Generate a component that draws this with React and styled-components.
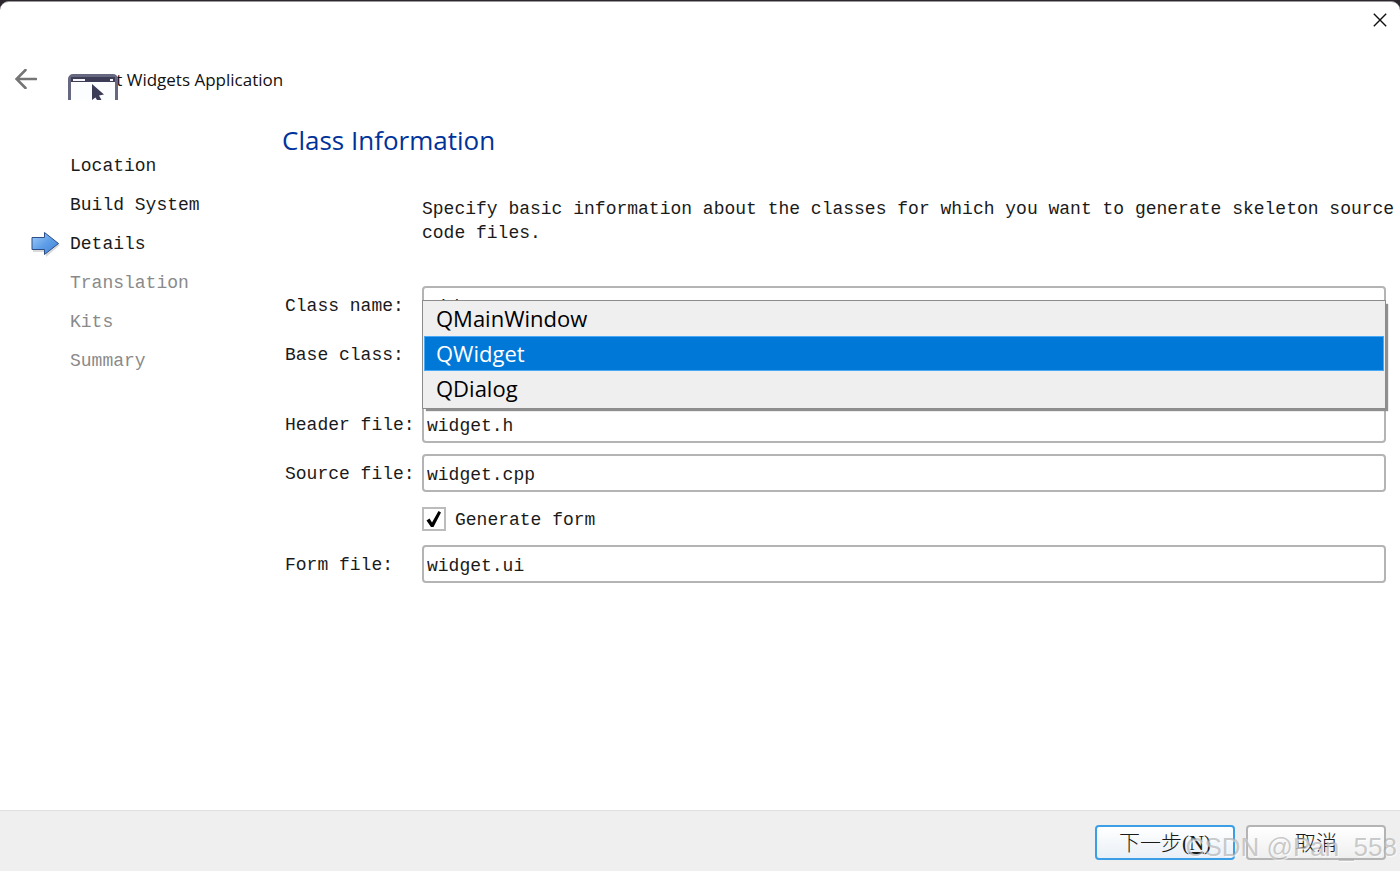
import React from "react";
import styled, { createGlobalStyle } from "styled-components";

const steps = [
  { name: "Location", state: "done" },
  { name: "Build System", state: "done" },
  { name: "Details", state: "current" },
  { name: "Translation", state: "todo" },
  { name: "Kits", state: "todo" },
  { name: "Summary", state: "todo" },
];

const baseClasses = ["QMainWindow", "QWidget", "QDialog"];

const App = () => {
  return (
    <>
      <GlobalStyle />
      <Desktop>
        <Dialog>
          <TitleBar>
            <CloseButton type="button" aria-label="Close">
              <svg width="14" height="14" viewBox="0 0 14 14">
                <path d="M0.8 0.8L13.2 13.2M13.2 0.8L0.8 13.2" stroke="#111" strokeWidth="1.4" />
              </svg>
            </CloseButton>
          </TitleBar>

          <Header>
            <BackButton type="button" aria-label="Back">
              <svg width="22" height="20" viewBox="0 0 22 20" fill="none">
                <path d="M21 10H2M10.5 1L1.5 10L10.5 19" stroke="#757575" strokeWidth="2.6" strokeLinecap="round" />
              </svg>
            </BackButton>
            <WizardTitle>Qt Widgets Application</WizardTitle>
            <AppIcon />
          </Header>

          <Body>
            <Steps>
              {steps.map((step) => (
                <Step key={step.name} $state={step.state}>
                  <Marker>{step.state === "current" && <StepArrow />}</Marker>
                  {step.name}
                </Step>
              ))}
            </Steps>

            <Page>
              <PageTitle>Class Information</PageTitle>
              <Intro>
                Specify basic information about the classes for which you want to generate skeleton
                source code files.
              </Intro>
              <Form>
                <FieldGroup>
                  <Label htmlFor="className">Class name:</Label>
                  <TextInput id="className" defaultValue="Widget" />
                  <Label htmlFor="baseClass">Base class:</Label>
                  <Combo>
                    <Select id="baseClass" defaultValue="QWidget">
                      {baseClasses.map((name) => (
                        <option key={name}>{name}</option>
                      ))}
                    </Select>
                    <Popup role="listbox" aria-label="Base class">
                      {baseClasses.map((name) => (
                        <PopupItem
                          key={name}
                          role="option"
                          aria-selected={name === "QWidget"}
                          $active={name === "QWidget"}
                        >
                          {name}
                        </PopupItem>
                      ))}
                    </Popup>
                  </Combo>
                </FieldGroup>
                <FieldGroup>
                  <Label htmlFor="headerFile">Header file:</Label>
                  <TextInput id="headerFile" defaultValue="widget.h" />
                  <Label htmlFor="sourceFile">Source file:</Label>
                  <TextInput id="sourceFile" defaultValue="widget.cpp" />
                  <CheckRow>
                    <CheckBoxWrap>
                      <Checkbox id="generateForm" type="checkbox" defaultChecked />
                      <CheckMark width="18" height="18" viewBox="0 0 18 18" fill="none">
                        <path d="M1.500 10.500L4.500 8.500L7 12.500L13.500 1L16 2.500L8.500 17H6Z" fill="#000" />
                      </CheckMark>
                    </CheckBoxWrap>
                    <CheckLabel htmlFor="generateForm">Generate form</CheckLabel>
                  </CheckRow>
                  <Label htmlFor="formFile">Form file:</Label>
                  <TextInput id="formFile" defaultValue="widget.ui" />
                </FieldGroup>
              </Form>
            </Page>
          </Body>

          <Footer>
            <FooterButton type="button" $primary>
              下一步(<u>N</u>)
            </FooterButton>
            <FooterButton type="button">取消</FooterButton>
            <Watermark>CSDN @Pan_558</Watermark>
          </Footer>
        </Dialog>
      </Desktop>
    </>
  );
};

const AppIcon = () => (
  <IconSlot>
    <svg width="50" height="26" viewBox="0 0 50 26">
      <path d="M1.5 26V5a3.5 3.5 0 0 1 3.5-3.5H45A3.5 3.5 0 0 1 48.500 5V26" fill="#fcfdfe" stroke="#666880" strokeWidth="3" />
      <rect x="3" y="3" width="44" height="5" fill="#3d3d58" />
      <rect x="5" y="5" width="12" height="2" fill="#f4f4f8" />
      <rect x="42" y="5" width="3" height="2" fill="#f4f4f8" />
      <path d="M24 10L36 20.500L31 21.500L33.500 26H29L27.500 23.500L24 26Z" fill="#3d3d58" />
    </svg>
  </IconSlot>
);

const StepArrow = () => (
  <svg width="30" height="26" viewBox="0 0 30 26">
    <defs>
      <linearGradient id="arrowFill" x1="0" y1="0" x2="1" y2="1">
        <stop offset="0" stopColor="#a5d0fb" />
        <stop offset="0.5" stopColor="#5f9fe8" />
        <stop offset="1" stopColor="#3f80d6" />
      </linearGradient>
    </defs>
    <path d="M2 8H15V3L29 14L15 26V21H2Z" fill="#000" opacity="0.15" />
    <path d="M1 6.500H13.500V1.500L27.500 12.500L13.500 23.500V18.500H1Z" fill="url(#arrowFill)" stroke="#2b4f86" strokeWidth="1" />
  </svg>
);

const GlobalStyle = createGlobalStyle`
  * {
    box-sizing: border-box;
  }

  body {
    margin: 0;
    font-family: "Liberation Mono", "Noto Sans CJK SC", monospace;
    font-size: 18px;
    line-height: 24px;
    color: #1a1a1a;
  }

  button, input, select {
    font: inherit;
    color: inherit;
  }
`;

const Desktop = styled.div`
  display: flex;
  min-height: 100vh;
  padding-top: 1px;
  background: #2c282d;
`;

const Dialog = styled.main`
  display: flex;
  flex: 1;
  flex-direction: column;
  border-top: 1px solid #9a989b;
  border-radius: 9px 9px 0 0;
  background: #fff;
`;

const TitleBar = styled.div`
  display: flex;
  justify-content: flex-end;
  height: 36px;
`;

const CloseButton = styled.button`
  display: flex;
  align-items: center;
  justify-content: center;
  width: 40px;
  padding: 0;
  border: none;
  background: none;
`;

const Header = styled.header`
  position: relative;
  display: flex;
  align-items: center;
  height: 84px;
  padding-left: 15px;
`;

const BackButton = styled.button`
  display: flex;
  padding: 0 0 3px;
  border: none;
  background: none;
`;

const WizardTitle = styled.span`
  margin-left: 66px;
  font-family: "Open Sans", sans-serif;
  font-size: 17px;
  color: #111;
`;

/* sits over the first letter of the title */
const IconSlot = styled.div`
  position: absolute;
  top: 36px;
  left: 68px;
  display: flex;
`;

const Body = styled.div`
  display: flex;
  flex: 1;
`;

const Steps = styled.ol`
  display: flex;
  flex-direction: column;
  gap: 15px;
  width: 282px;
  margin: 0;
  padding: 32px 0 0 31px;
  list-style: none;
`;

const Step = styled.li`
  display: flex;
  align-items: center;
  color: ${({ $state }) => ($state === "todo" ? "#8a8a8a" : "#1a1a1a")};
`;

const Marker = styled.span`
  display: flex;
  align-items: center;
  width: 39px;
  height: 24px;
`;

const Page = styled.section`
  flex: 1;
  min-width: 0;
`;

const PageTitle = styled.h1`
  margin: 0;
  font-family: "Open Sans", sans-serif;
  font-size: 26px;
  font-weight: 400;
  line-height: 36px;
  color: #003399;
`;

const Intro = styled.p`
  margin: 39px 0 0;
  padding-left: 140px;
`;

const Form = styled.div`
  display: flex;
  flex-direction: column;
  gap: 32px;
  margin-top: 41px;
  padding: 0 14px 0 3px;
`;

const FieldGroup = styled.div`
  display: grid;
  grid-template-columns: 137px 1fr;
  row-gap: 11px;
`;

const Label = styled.label`
  height: 38px;
  line-height: 40px;
`;

const TextInput = styled.input`
  width: 100%;
  height: 38px;
  padding: 3px 3px 0;
  border: 2px solid #b4b4b4;
  border-radius: 4px;
  background: #fff;
`;

const Combo = styled.div`
  position: relative;
`;

const Select = styled.select`
  width: 100%;
  height: 38px;
  border: 2px solid #b4b4b4;
  border-radius: 4px;
  background: #fff;
`;

const Popup = styled.ul`
  position: absolute;
  top: -35px;
  left: 0;
  right: 0;
  margin: 0;
  padding: 0 1px 2px;
  border: 1px solid #8c8c8c;
  background: #efefef;
  box-shadow: 3px 3px 1px -1px #8f8f8f;
  list-style: none;
`;

const PopupItem = styled.li`
  height: 35px;
  padding: 0 11px;
  border: 1px solid ${({ $active }) => ($active ? "#4aa8f5" : "transparent")};
  background: ${({ $active }) => ($active ? "#0078d7" : "transparent")};
  font-family: "Open Sans", sans-serif;
  font-size: 22px;
  line-height: 32px;
  color: ${({ $active }) => ($active ? "#fff" : "#000")};
`;

const CheckRow = styled.div`
  display: flex;
  grid-column: 2;
  align-items: center;
  gap: 9px;
  height: 31px;
`;

const CheckBoxWrap = styled.span`
  position: relative;
  display: flex;
`;

const Checkbox = styled.input`
  width: 24px;
  height: 24px;
  margin: 0;
  border: 2px solid #bcbcbc;
  background: #fff;
  appearance: none;
`;

const CheckMark = styled.svg`
  position: absolute;
  top: 3px;
  left: 3px;
  visibility: hidden;
  pointer-events: none;

  ${Checkbox}:checked + & {
    visibility: visible;
  }
`;

const CheckLabel = styled.label`
  padding-top: 2px;
`;

const Footer = styled.footer`
  position: relative;
  display: flex;
  justify-content: flex-end;
  gap: 11px;
  padding: 14px 14px 11px;
  border-top: 1px solid #dfdfdf;
  background: #efefef;
`;

const FooterButton = styled.button`
  width: 140px;
  height: 35px;
  padding: 0;
  border: 2px solid ${({ $primary }) => ($primary ? "#3c9ee5" : "#b4b4b4")};
  border-radius: 4px;
  background: ${({ $primary }) =>
    $primary ? "linear-gradient(#fff, #e9f0f7)" : "linear-gradient(#fff, #efefef)"};
  font-family: "Liberation Serif", "Noto Sans CJK SC", serif;
  font-size: 21px;
  font-weight: 300;
  line-height: 30px;
`;

const Watermark = styled.span`
  position: absolute;
  right: 3px;
  bottom: 8px;
  font-family: "Liberation Sans", sans-serif;
  font-size: 26px;
  line-height: 32px;
  color: rgba(160, 160, 160, 0.55);
  text-shadow: 1px 1px 1px rgba(255, 255, 255, 0.7);
  pointer-events: none;
`;

export default App;
